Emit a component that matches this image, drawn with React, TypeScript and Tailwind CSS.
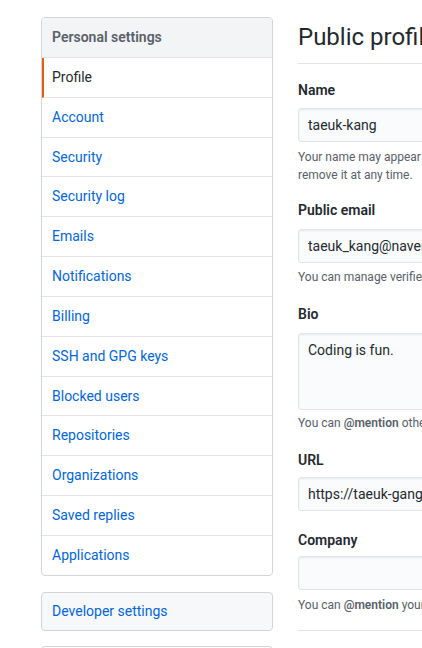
import React from "react";

const items = [
  "Account",
  "Security",
  "Security log",
  "Emails",
  "Notifications",
  "Billing",
  "SSH and GPG keys",
  "Blocked users",
  "Repositories",
  "Organizations",
  "Saved replies",
  "Applications",
];

const inputCls =
  "block w-[440px] h-[34px] border border-[#e1e4e8] bg-[#fafbfc] rounded-[3px] px-[9px] text-[14px] leading-[20px] text-[#24292e] shadow-[inset_0_1px_2px_rgba(27,31,35,0.075)] outline-none";

export default function App() {
  return (
    <div className="w-[422px] h-[648px] overflow-hidden bg-white flex items-start pl-[41px] pt-[17px] font-['Roboto','Noto_Sans',sans-serif] text-[14px] text-[#24292e]">
      <nav className="w-[232px] shrink-0 flex flex-col">
        <div className="shrink-0 border border-[#d1d5da] rounded-[4px] overflow-hidden">
          <div className="bg-[#f3f4f6] px-[10px] py-[9px] leading-[21px] font-semibold text-[#586069] border-b border-[#e1e4e8]">
            Personal settings
          </div>
          <div className="border-b border-[#e1e4e8] border-l-2 border-l-[#e36209] pl-[8px] py-[9px] leading-[20.83px] text-[#24292e]">
            Profile
          </div>
          {items.map((it, i) => (
            <div
              key={it}
              className={
                i === items.length - 1
                  ? "px-[10px] py-[9px] leading-[20.83px] text-[#0366d6]"
                  : "px-[10px] py-[9px] leading-[20.83px] text-[#0366d6] border-b border-[#e1e4e8]"
              }
            >
              {it}
            </div>
          ))}
        </div>
        <div className="shrink-0 mt-[16px] border border-[#d1d5da] rounded-[4px] bg-[#f6f8fa] px-[10px] py-[8px] leading-[21px] text-[#0366d6]">
          Developer settings
        </div>
        <div className="shrink-0 mt-[15px] border border-[#d1d5da] rounded-[4px] h-[40px]"></div>
      </nav>

      <main className="ml-[25px] w-[640px] shrink-0">
        <h2 className="mt-[2px] text-[24px] leading-[36px] font-normal pb-2 border-b border-[#e1e4e8]">
          Public profile
        </h2>

        <div className="mt-4">
          <label className="block font-semibold leading-[21px]">Name</label>
          <input className={`mt-[7px] ${inputCls}`} readOnly value="taeuk-kang" />
          <p className="mt-[6px] text-[12px] leading-[18px] text-[#586069] whitespace-nowrap">
            Your name may appear around GitHub where you contribute or are mentioned. You can
            <br />
            remove it at any time.
          </p>
        </div>

        <div className="mt-[16px]">
          <label className="block font-semibold leading-[21px]">Public email</label>
          <input className={`mt-[8px] ${inputCls}`} readOnly value="taeuk_kang@naver.com" />
          <p className="mt-[5px] text-[12px] leading-[18px] text-[#586069] whitespace-nowrap">
            You can manage verified email addresses in your email settings.
          </p>
        </div>

        <div className="mt-[18px]">
          <label className="block font-semibold leading-[21px]">Bio</label>
          <textarea
            className="mt-[8px] block w-[440px] h-[77px] resize-none border border-[#e1e4e8] bg-[#fafbfc] rounded-[3px] px-[9px] pt-[6px] text-[14px] leading-[20px] text-[#24292e] shadow-[inset_0_1px_2px_rgba(27,31,35,0.075)] outline-none"
            readOnly
            value="Coding is fun."
          />
          <p className="mt-[4px] text-[12px] leading-[18px] text-[#586069] whitespace-nowrap">
            You can <span className="font-semibold">@mention</span> other users and organizations to link to them.
          </p>
        </div>

        <div className="mt-[18px]">
          <label className="block font-semibold leading-[21px]">URL</label>
          <input className={`mt-[6px] ${inputCls}`} readOnly value="https://taeuk-gang.github.io" />
        </div>

        <div className="mt-[19px]">
          <label className="block font-semibold leading-[21px]">Company</label>
          <input className={`mt-[5px] ${inputCls}`} readOnly value="" />
          <p className="mt-[6px] text-[12px] leading-[18px] text-[#586069] whitespace-nowrap">
            You can <span className="font-semibold">@mention</span> your company's GitHub organization to link it.
          </p>
        </div>

        <div className="mt-4 border-t border-[#e1e4e8]"></div>
      </main>
    </div>
  );
}
